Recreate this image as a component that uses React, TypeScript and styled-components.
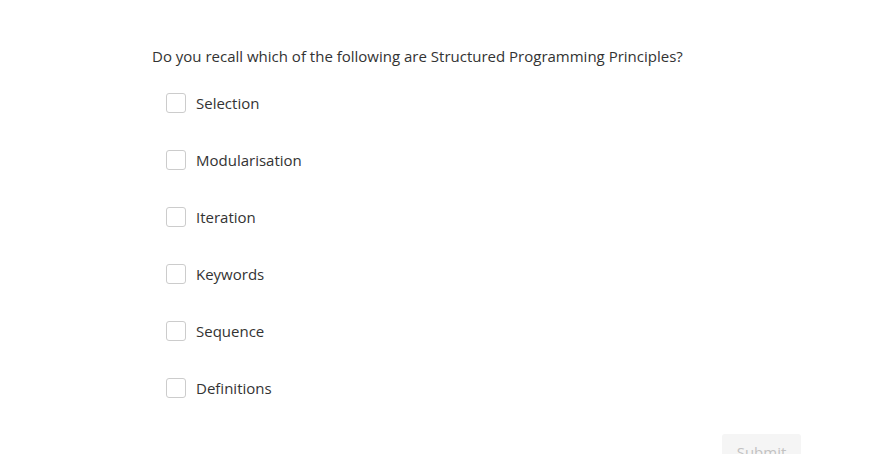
import React, { useState } from "react";
import styled, { createGlobalStyle } from "styled-components";

const GlobalStyle = createGlobalStyle`
  body {
    margin: 0;
    background: #ffffff;
    font-family: "Open Sans", "Noto Sans", sans-serif;
    color: #333333;
  }
`;

const Container = styled.div`
  padding: 46px 82px 0 152px;
`;

const Question = styled.p`
  margin: 0;
  font-size: 15px;
  line-height: 20px;
  color: #333333;
`;

const Options = styled.ul`
  list-style: none;
  margin: 27px 0 0;
  padding: 0 0 0 14px;
  display: flex;
  flex-direction: column;
  gap: 37px;
`;

const Option = styled.li`
  display: flex;
  align-items: center;
  gap: 10px;
  height: 20px;
  cursor: pointer;
`;

const Box = styled.span<{ checked: boolean }>`
  width: 18px;
  height: 18px;
  border: 1px solid #cccccc;
  border-radius: 3px;
  background: ${(props) => (props.checked ? "#3b82f6" : "#ffffff")};
  flex-shrink: 0;
`;

const Label = styled.span`
  font-size: 15px;
  line-height: 20px;
  color: #333333;
`;

const Footer = styled.div`
  display: flex;
  justify-content: flex-end;
  margin-top: 36px;
`;

const SubmitButton = styled.button`
  font-family: "Open Sans", "Noto Sans", sans-serif;
  font-size: 15px;
  width: 79px;
  height: 36px;
  border: none;
  border-radius: 3px;
  background: #f5f5f5;
  color: #c2c2c2;
  padding: 0;
`;

const options = [
  "Selection",
  "Modularisation",
  "Iteration",
  "Keywords",
  "Sequence",
  "Definitions",
];

const App = () => {
  const [checked, setChecked] = useState<string[]>([]);
  const toggle = (o: string) =>
    setChecked((c) => (c.includes(o) ? c.filter((x) => x !== o) : [...c, o]));
  return (
    <Container>
      <GlobalStyle />
      <Question>
        Do you recall which of the following are Structured Programming
        Principles?
      </Question>
      <Options>
        {options.map((o) => (
          <Option key={o} onClick={() => toggle(o)}>
            <Box checked={checked.includes(o)} />
            <Label>{o}</Label>
          </Option>
        ))}
      </Options>
      <Footer>
        <SubmitButton disabled={checked.length === 0}>Submit</SubmitButton>
      </Footer>
    </Container>
  );
};

export default App;
